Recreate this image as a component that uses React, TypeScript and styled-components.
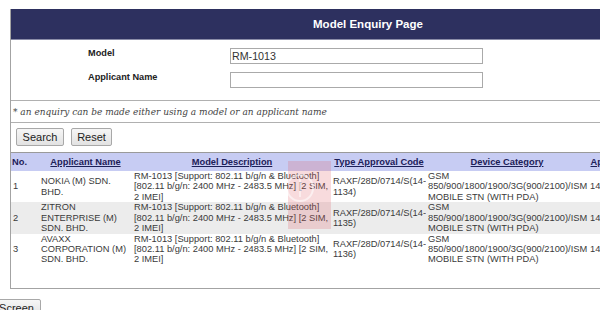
import React from "react";
import styled, { createGlobalStyle } from "styled-components";

const Global = createGlobalStyle`
  html, body { margin: 0; padding: 0; background: #fff; overflow: hidden; }
  body { font-family: "Liberation Sans", Arial, sans-serif; width: 600px; height: 310px; }
`;

const Page = styled.div`
  position: relative;
  width: 600px;
  height: 310px;
  overflow: hidden;
  padding-top: 9px;
  box-sizing: border-box;
`;

const Panel = styled.div`
  margin-left: 10px;
  width: 714px;
  border-left: 1px solid #a3a3a3;
  border-bottom: 1px solid #a3a3a3;
  padding-bottom: 23px;
`;

const TitleBar = styled.div`
  height: 30px;
  background: #2d305f;
  border-bottom: 1px solid #8a8ca8;
  color: #fff;
  font-weight: bold;
  font-size: 11.5px;
  display: flex;
  align-items: center;
  justify-content: center;
`;

const Form = styled.div`
  display: grid;
  grid-template-columns: 142px 253px;
  row-gap: 8px;
  padding: 8px 0 12px 77px;
`;

const Label = styled.label`
  font-size: 9.2px;
  font-weight: bold;
  color: #222;
  line-height: 10px;
`;

const Input = styled.input`
  box-sizing: border-box;
  height: 16px;
  width: 253px;
  border: 1px solid #aaa;
  padding: 0 1px;
  margin: 0;
  font-family: "Liberation Sans", Arial, sans-serif;
  font-size: 10.7px;
  color: #333;
  background: #fff;
  outline: none;
`;

const Note = styled.div`
  border-top: 1px solid #b0b0b0;
  border-bottom: 1px solid #b0b0b0;
  height: 21px;
  display: flex;
  align-items: center;
  padding-left: 2px;
  font-family: "DejaVu Serif", Georgia, serif;
  font-style: italic;
  font-size: 9px;
  color: #444;
`;

const Actions = styled.div`
  display: flex;
  gap: 7px;
  padding: 5px 0 0 5px;
  height: 30px;
  box-sizing: border-box;
  border-bottom: 1px solid #9a9a9a;
`;

const Button = styled.button<{ $w: number }>`
  box-sizing: border-box;
  width: ${(p) => p.$w}px;
  height: 18px;
  padding: 0;
  border: 1px solid #a8a8a8;
  border-radius: 2px;
  background: linear-gradient(#f6f6f6, #e2e2e2);
  font-family: "Liberation Sans", Arial, sans-serif;
  font-size: 11px;
  color: #222;
`;

const ScreenButton = styled(Button)`
  margin: 10px 0 0 -8px;
  display: block;
`;

const Table = styled.table`
  width: 100%;
  border-collapse: collapse;
  table-layout: fixed;
  font-size: 9.3px;
`;

const Th = styled.th<{ $w?: number }>`
  width: ${(p) => (p.$w ? `${p.$w}px` : "auto")};
  height: 18px;
  padding: 0;
  background: #c7ccf3;
  font-weight: bold;
  color: #1c2058;
  text-decoration: underline;
  text-align: center;
  white-space: nowrap;
  overflow: hidden;
  &:first-child { text-align: left; text-decoration: none; padding-left: 1px; }
`;

const Tr = styled.tr<{ $alt: boolean }>`
  background: ${(p) => (p.$alt ? "#ececec" : "#fff")};
`;

const Td = styled.td`
  padding: 0 2px;
  height: 31.3px;
  line-height: 10.4px;
  color: #3a3a3a;
  vertical-align: middle;
  white-space: pre-line;
  overflow: hidden;
  &:nth-child(4) { padding-left: 1px; }
`;

const Watermark = styled.svg`
  position: absolute;
  left: 288px;
  top: 161px;
  pointer-events: none;
`;

const rows = [
  {
    no: "1",
    name: "NOKIA (M) SDN.\nBHD.",
    code: "RAXF/28D/0714/S(14-\n1134)",
  },
  {
    no: "2",
    name: "ZITRON\nENTERPRISE (M)\nSDN. BHD.",
    code: "RAXF/28D/0714/S(14-\n1135)",
  },
  {
    no: "3",
    name: "AVAXX\nCORPORATION (M)\nSDN. BHD.",
    code: "RAXF/28D/0714/S(14-\n1136)",
  },
];

const desc =
  "RM-1013 [Support: 802.11 b/g/n & Bluetooth]\n[802.11 b/g/n: 2400 MHz - 2483.5 MHz] [2 SIM,\n2 IMEI]";
const cat = "GSM\n850/900/1800/1900/3G(900/2100)/ISM\nMOBILE STN (WITH PDA)";

export default function App() {
  return (
    <>
      <Global />
      <Page>
        <Panel>
          <TitleBar>Model Enquiry Page</TitleBar>
          <Form>
            <Label>Model</Label>
            <Input defaultValue="RM-1013" />
            <Label>Applicant Name</Label>
            <Input defaultValue="" />
          </Form>
          <Note>* an enquiry can be made either using a model or an applicant name</Note>
          <Actions>
            <Button $w={48}>Search</Button>
            <Button $w={41}>Reset</Button>
          </Actions>
          <Table>
            <thead>
              <tr>
                <Th $w={27}>No.</Th>
                <Th $w={93}>Applicant Name</Th>
                <Th $w={200}>Model Description</Th>
                <Th $w={94}>Type Approval Code</Th>
                <Th $w={162}>Device Category</Th>
                <Th $w={68}>Approval Date</Th>
                <Th>Expiry Date</Th>
              </tr>
            </thead>
            <tbody>
              {rows.map((r, i) => (
                <Tr key={r.no} $alt={i % 2 === 1}>
                  <Td>{r.no}</Td>
                  <Td>{r.name}</Td>
                  <Td>{desc}</Td>
                  <Td>{r.code}</Td>
                  <Td>{cat}</Td>
                  <Td>14/07/2014</Td>
                  <Td>13/07/2016</Td>
                </Tr>
              ))}
            </tbody>
          </Table>
        </Panel>
        <ScreenButton $w={49}>Screen</ScreenButton>
        <Watermark width="43" height="68" viewBox="0 0 43 68">
          <rect x="0" y="0" width="43" height="68" fill="rgba(225,90,100,0.22)" />
          <circle cx="12" cy="27" r="13" fill="none" stroke="rgba(255,255,255,0.55)" strokeWidth="2" />
          <path d="M12 18 L12 36" stroke="rgba(255,255,255,0.5)" strokeWidth="2" />
        </Watermark>
      </Page>
    </>
  );
}
